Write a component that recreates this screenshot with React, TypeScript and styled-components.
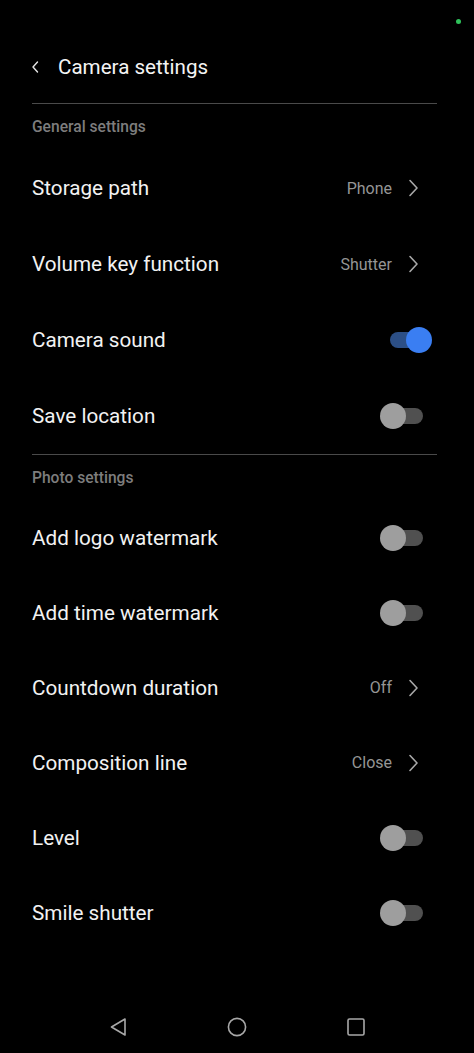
import React from "react";
import styled, { createGlobalStyle } from "styled-components";

const GlobalStyle = createGlobalStyle`
  html, body {
    margin: 0;
    padding: 0;
    background: #000;
  }
  body {
    font-family: Roboto, "Noto Sans", "Liberation Sans", sans-serif;
    -webkit-font-smoothing: antialiased;
  }
`;

const Screen = styled.div`
  min-height: 100vh;
  background: #000;
  display: flex;
  flex-direction: column;
  color: #f2f2f2;
`;

const StatusBar = styled.div`
  height: 39px;
  display: flex;
  justify-content: flex-end;
  align-items: flex-start;
  padding: 19px 13px 0 0;
  box-sizing: border-box;
`;

const GreenDot = styled.span`
  width: 5px;
  height: 5px;
  border-radius: 50%;
  background: #2fc25b;
`;

const TitleBar = styled.div`
  height: 56px;
  display: flex;
  align-items: center;
  padding: 0 32px;
  gap: 19px;
`;

const Title = styled.h1`
  margin: 0;
  font-size: 20.6px;
  font-weight: 400;
  color: #f4f4f4;
`;

const Divider = styled.hr`
  margin: 8px 37px 0 32px;
  border: none;
  height: 1px;
  background: #4a4a4a;
`;

const SectionDivider = styled(Divider)`
  margin-top: 0;
`;

const SectionHeader = styled.div<{ $height: number }>`
  height: ${(p) => p.$height}px;
  display: flex;
  align-items: center;
  padding: 0 32px;
  font-size: 15.6px;
  font-weight: 500;
  color: #7d7d7d;
`;

const Row = styled.div<{ $height: number }>`
  height: ${(p) => p.$height}px;
  display: flex;
  align-items: center;
  justify-content: space-between;
  padding: 0 42px 0 32px;
`;

const Label = styled.span`
  font-size: 20.7px;
  color: #f2f2f2;
`;

const ValueGroup = styled.div`
  display: flex;
  align-items: center;
  gap: 16px;
  margin-right: 13px;
`;

const Value = styled.span`
  font-size: 16px;
  color: #959595;
`;

const Track = styled.div<{ $on: boolean }>`
  position: relative;
  width: 52px;
  height: 26px;
  &::before {
    content: "";
    position: absolute;
    left: 10px;
    right: 9px;
    top: 5px;
    height: 16px;
    border-radius: 8px;
    background: ${(p) => (p.$on ? "#2c4f86" : "#505050")};
  }
`;

const Knob = styled.span<{ $on: boolean }>`
  position: absolute;
  top: 0;
  left: ${(p) => (p.$on ? "26px" : "0")};
  width: 26px;
  height: 26px;
  border-radius: 50%;
  background: ${(p) => (p.$on ? "#3a7ef2" : "#9e9e9e")};
`;

const Spacer = styled.div`
  flex: 1;
`;

const NavBar = styled.div`
  height: 52px;
  display: flex;
  align-items: center;
  gap: 100px;
  padding-left: 109px;
`;

const Chevron = () => (
  <svg width="11" height="18" viewBox="0 0 11 18" fill="none">
    <path d="M2 1.5 L9 9 L2 16.5" stroke="#a8a8a8" strokeWidth="1.6" strokeLinecap="round" strokeLinejoin="round" />
  </svg>
);

const BackIcon = () => (
  <svg width="7" height="12" viewBox="0 0 7 12" fill="none">
    <path d="M5.5 1 L1 6 L5.5 11" stroke="#e6e6e6" strokeWidth="1.4" strokeLinecap="round" strokeLinejoin="round" />
  </svg>
);

const Toggle = ({ on }: { on: boolean }) => (
  <Track $on={on}>
    <Knob $on={on} />
  </Track>
);

type Item = { label: string; value?: string; toggle?: boolean };

const general: Item[] = [
  { label: "Storage path", value: "Phone" },
  { label: "Volume key function", value: "Shutter" },
  { label: "Camera sound", toggle: true },
  { label: "Save location", toggle: false },
];

const photo: Item[] = [
  { label: "Add logo watermark", toggle: false },
  { label: "Add time watermark", toggle: false },
  { label: "Countdown duration", value: "Off" },
  { label: "Composition line", value: "Close" },
  { label: "Level", toggle: false },
  { label: "Smile shutter", toggle: false },
];

const SettingRow = ({ item, height }: { item: Item; height: number }) => (
  <Row $height={height}>
    <Label>{item.label}</Label>
    {item.value !== undefined ? (
      <ValueGroup>
        <Value>{item.value}</Value>
        <Chevron />
      </ValueGroup>
    ) : (
      <Toggle on={!!item.toggle} />
    )}
  </Row>
);

export default function App() {
  return (
    <Screen>
      <GlobalStyle />
      <StatusBar>
        <GreenDot />
      </StatusBar>
      <TitleBar>
        <BackIcon />
        <Title>Camera settings</Title>
      </TitleBar>
      <Divider />
      <SectionHeader $height={46}>General settings</SectionHeader>
      {general.map((item) => (
        <SettingRow key={item.label} item={item} height={76} />
      ))}
      <SectionDivider />
      <SectionHeader $height={45}>Photo settings</SectionHeader>
      {photo.map((item) => (
        <SettingRow key={item.label} item={item} height={75} />
      ))}
      <Spacer />
      <NavBar>
        <svg width="18" height="20" viewBox="0 0 18 20" fill="none">
          <path d="M16 2 L2.5 10 L16 18 Z" stroke="#a8a8a8" strokeWidth="1.6" strokeLinejoin="round" />
        </svg>
        <svg width="20" height="20" viewBox="0 0 20 20" fill="none">
          <circle cx="10" cy="10" r="8.6" stroke="#a8a8a8" strokeWidth="1.6" />
        </svg>
        <svg width="18" height="18" viewBox="0 0 18 18" fill="none">
          <rect x="1" y="1" width="16" height="16" rx="1.5" stroke="#a8a8a8" strokeWidth="1.6" />
        </svg>
      </NavBar>
    </Screen>
  );
}
